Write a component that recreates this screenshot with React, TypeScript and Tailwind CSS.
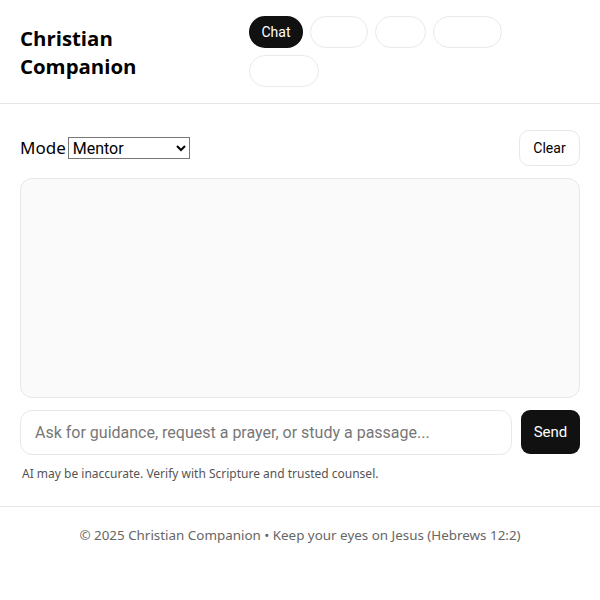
import React from "react";

export default function App() {
  const tabs = ["Chat", "", "", "", ""];
  const widths = ["w-[54px]", "w-[58px]", "w-[51px]", "w-[69px]", "w-[70px]"];
  return (
    <div className="min-h-[600px] bg-white text-black" style={{ fontFamily: '"Open Sans", sans-serif' }}>
      <header className="flex items-center border-b border-[#e5e5e5] px-5 py-4">
        <h1 className="w-[229px] shrink-0 pr-[40px] text-[20.4px] font-bold leading-[28px]">Christian Companion</h1>
        <nav className="flex w-[300px] flex-wrap gap-[7px]" style={{ fontFamily: "Roboto, sans-serif" }}>
          {tabs.map((t, i) => (
            <button
              key={i}
              className={`h-[32px] ${widths[i]} rounded-full text-[14px] ${
                i === 0 ? "bg-[#111] text-white" : "border border-[#eaeaea] bg-white text-white"
              }`}
            >
              {t}
            </button>
          ))}
        </nav>
      </header>
      <main className="px-5 pt-[26px]">
        <div className="flex items-center justify-between">
          <div className="flex items-center gap-[2px]">
            <span className="text-[17px]" style={{ fontFamily: '"Noto Sans", sans-serif' }}>Mode</span>
            <select
              className="h-[22px] w-[122px] border border-[#777] px-0 text-[16px]"
              style={{ fontFamily: "Roboto, sans-serif" }}
              defaultValue="Mentor"
            >
              <option>Mentor</option>
            </select>
          </div>
          <button
            className="h-[36px] w-[61px] rounded-[10px] border border-[#e8e8e8] text-[14px]"
            style={{ fontFamily: "Roboto, sans-serif" }}
          >
            Clear
          </button>
        </div>
        <div className="mt-[12px] h-[220px] rounded-[12px] border border-[#e8e8e8] bg-[#fafafa]" />
        <div className="mt-[12px] flex gap-[9px]" style={{ fontFamily: "Roboto, sans-serif" }}>
          <input
            className="h-[45px] flex-1 rounded-[12px] border border-[#e8e8e8] px-[14px] text-[16px] placeholder:text-[#777] outline-none"
            placeholder="Ask for guidance, request a prayer, or study a passage..."
          />
          <button className="h-[44px] w-[59px] rounded-[9px] bg-[#111] text-[15px] text-white">Send</button>
        </div>
        <p
          className="mt-[10px] pl-[2px] text-[12px] text-[#555]"
          style={{ fontFamily: '"Noto Sans", sans-serif' }}
        >
          AI may be inaccurate. Verify with Scripture and trusted counsel.
        </p>
      </main>
      <footer
        className="mt-[23px] border-t border-[#e5e5e5] py-[18px] text-center text-[13.4px] text-[#666]"
        style={{ fontFamily: '"Noto Sans", sans-serif' }}
      >
        © 2025 Christian Companion • Keep your eyes on Jesus (Hebrews 12:2)
      </footer>
    </div>
  );
}
